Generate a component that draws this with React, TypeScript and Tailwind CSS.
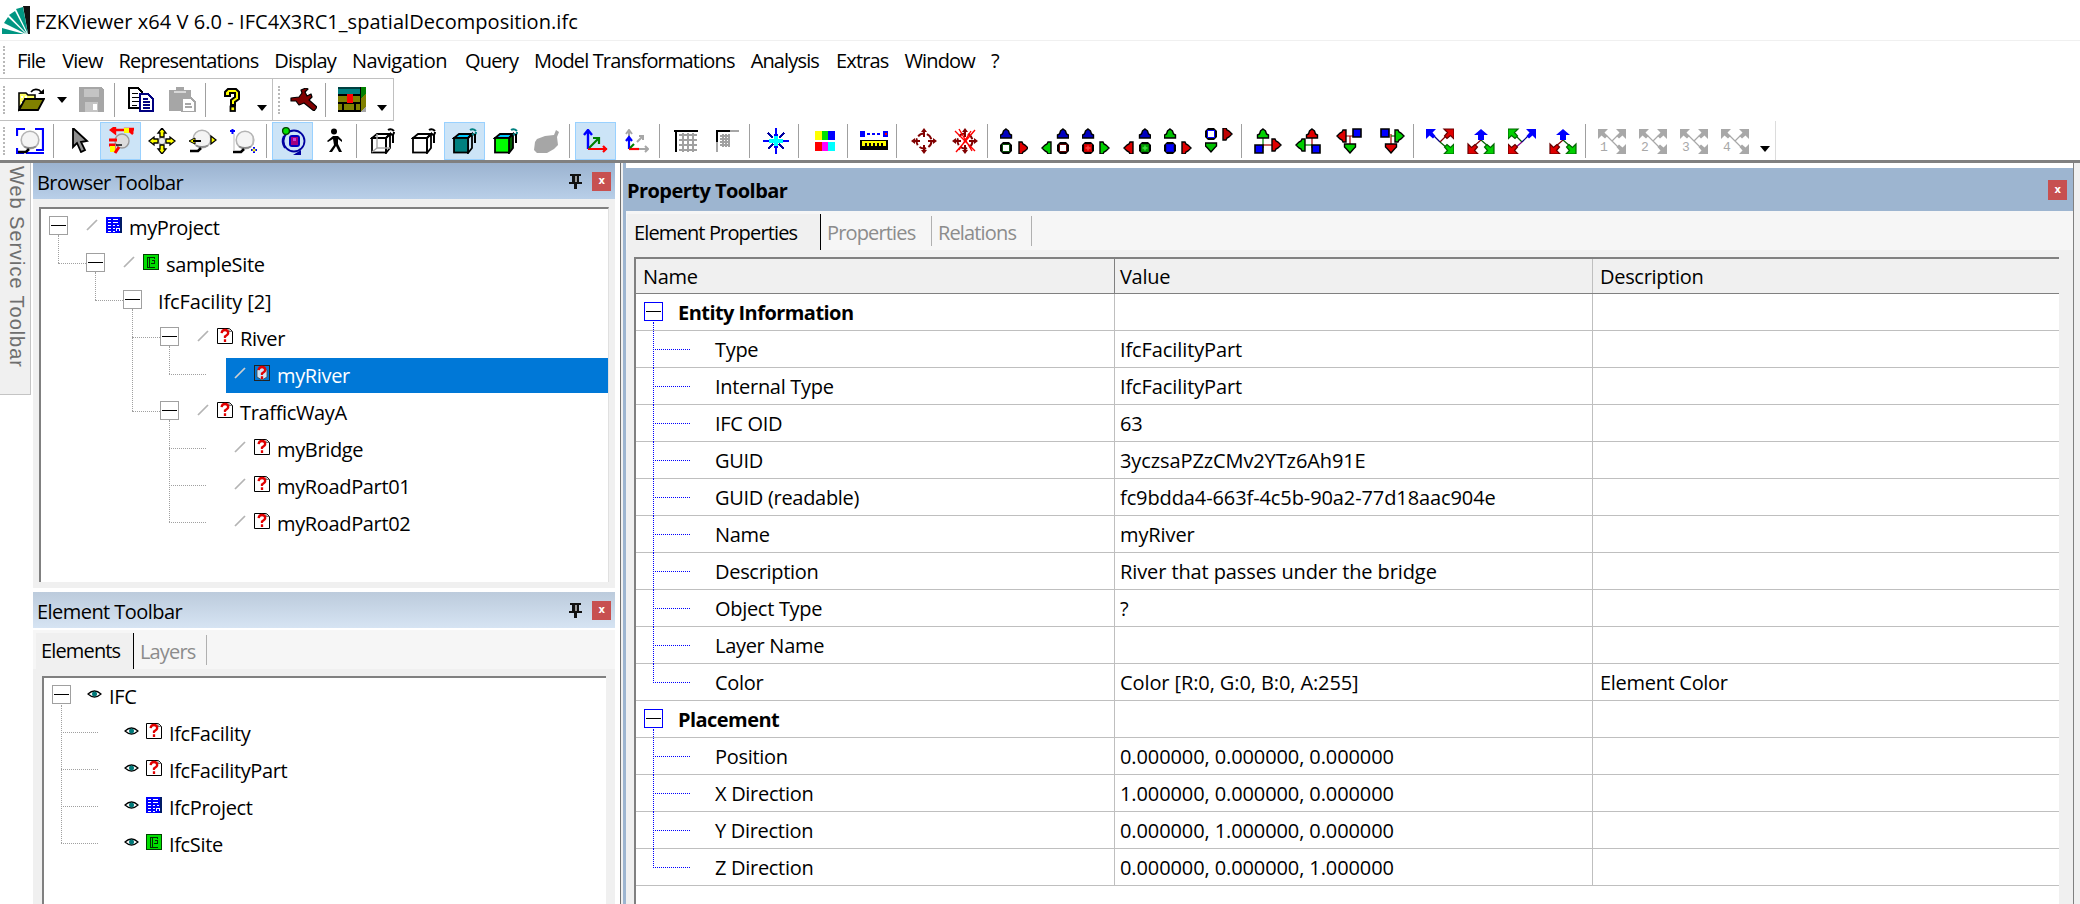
import type { ReactNode } from "react";

const K = "#000";

function Ico({ w = 28, h = 26, crisp = false, children }: { w?: number; h?: number; crisp?: boolean; children: ReactNode }) {
  return (
    <svg width={w} height={h} viewBox={`0 0 ${w} ${h}`} className="block shrink-0" shapeRendering={crisp ? "crispEdges" : "auto"}>
      {children}
    </svg>
  );
}

function Btn({ active, w = "w-[41px]", children }: { active?: boolean; w?: string; children: ReactNode }) {
  return (
    <div className={`${w} h-[38px] shrink-0 flex items-center justify-center border ${active ? "bg-[#cce4f7] border-[#99d1ff]" : "border-transparent"}`}>
      {children}
    </div>
  );
}

function Sep() {
  return (
    <div className="w-[8px] h-[38px] shrink-0 flex items-center pl-[2px]">
      <div className="w-px h-[34px] bg-[#a0a0a0]" />
    </div>
  );
}

function Drop({ mt }: { mt: string }) {
  return (
    <div className={`w-[20px] shrink-0 flex justify-center ${mt}`}>
      <div className="w-0 h-0 border-x-[5px] border-x-transparent border-t-[6px] border-t-black" />
    </div>
  );
}

function Grip() {
  return <div className="w-[3px] h-[28px] border-l-2 border-dotted border-[#b8b8b8] shrink-0" />;
}

/* small pixel shapes for the snap/move glyphs */
function Up({ x, y, c, dark = "#000" }: { x: number; y: number; c: string; dark?: string }) {
  return <polygon points={`${x + 5.5},${y} ${x + 8},${y + 2} ${x + 9},${y + 5} ${x + 11},${y + 6} ${x + 11},${y + 9} ${x},${y + 9} ${x},${y + 6} ${x + 2},${y + 5} ${x + 3},${y + 2}`} fill={c} stroke={dark} strokeWidth="1.4" />;
}
function Down({ x, y, c }: { x: number; y: number; c: string }) {
  return <polygon points={`${x},${y} ${x + 11},${y} ${x + 11},${y + 3} ${x + 9},${y + 5} ${x + 5.5},${y + 9} ${x + 2},${y + 5} ${x},${y + 3}`} fill={c} stroke={K} strokeWidth="1.4" />;
}
function Right({ x, y, c }: { x: number; y: number; c: string }) {
  return <polygon points={`${x},${y} ${x + 3},${y} ${x + 4},${y + 2} ${x + 6},${y + 3} ${x + 9},${y + 6} ${x + 6},${y + 9} ${x + 4},${y + 10} ${x + 3},${y + 12} ${x},${y + 12}`} fill={c} stroke={K} strokeWidth="1.4" />;
}
function Left({ x, y, c }: { x: number; y: number; c: string }) {
  return <polygon points={`${x + 9},${y} ${x + 6},${y} ${x + 5},${y + 2} ${x + 3},${y + 3} ${x},${y + 6} ${x + 3},${y + 9} ${x + 5},${y + 10} ${x + 6},${y + 12} ${x + 9},${y + 12}`} fill={c} stroke={K} strokeWidth="1.4" />;
}
function Dot({ x, y, ring = "#000", fill, cross }: { x: number; y: number; ring?: string; fill: string; cross?: string }) {
  return (
    <g>
      <polygon points={`${x + 3},${y} ${x + 9},${y} ${x + 12},${y + 3} ${x + 12},${y + 9} ${x + 9},${y + 12} ${x + 3},${y + 12} ${x},${y + 9} ${x},${y + 3}`} fill={K} />
      <rect x={x + 2} y={y + 2} width="8" height="8" fill={ring} />
      <rect x={x + 3} y={y + 3} width="6" height="6" fill={fill} />
      {cross && <path d={`M${x + 6} ${y + 3.5}v5M${x + 3.5} ${y + 6}h5`} stroke={cross} strokeWidth="1.4" />}
    </g>
  );
}
function Sq({ x, y, c }: { x: number; y: number; c: string }) {
  return <polygon points={`${x + 1},${y + 1} ${x + 9},${y + 1} ${x + 9},${y + 9} ${x + 1},${y + 9}`} fill={c} stroke={K} strokeWidth="1.6" />;
}
function Corner({ x, y, rot, c, edge }: { x: number; y: number; rot: number; c: string; edge?: string }) {
  return (
    <g transform={`translate(${x} ${y}) rotate(${rot} 5 5)`}>
      <polygon points="0,0 10,0 6.5,3.5 9.5,7 7,9.5 3.5,6.5 0,10" fill={c} stroke={edge ?? "none"} strokeWidth="1.2" />
    </g>
  );
}

function Mag({ x = 0, y = 0 }: { x?: number; y?: number }) {
  return (
    <g transform={`translate(${x} ${y})`}>
      <circle cx="12" cy="9" r="8.8" fill="#f4f4f4" stroke="#b4b4b4" strokeWidth="1.6" />
      <path d="M6 15.5q6 3 12 0" fill="none" stroke="#8c8c8c" strokeWidth="1.8" />
      <path d="M0 21h8l3-3" fill="none" stroke={K} strokeWidth="2.6" />
    </g>
  );
}

function Cube({ front = "none", side = "none", top = "none", inner, curl = K, edge = K }: { front?: string; side?: string; top?: string; inner?: boolean; curl?: string; edge?: string }) {
  return (
    <Ico w={26} h={26}>
      <polygon points="7,6 20,6 16,10 2,10" fill={top} stroke={edge} strokeWidth="1.8" />
      <polygon points="16,10 20,6 20,20 16,25" fill={side} stroke={edge} strokeWidth="1.8" />
      <rect x="2" y="10" width="14" height="14.5" fill={front} stroke={edge} strokeWidth="1.8" />
      {inner && <path d="M7 6v14h13M2 24l5-4" fill="none" stroke="#a6a6a6" strokeWidth="1.4" />}
      <path d="M20 6q4 2 4-2 M18 2q3-2 6 1" fill="none" stroke={curl} strokeWidth="2" />
      <path d="M23 6v9" stroke={K} strokeWidth="2" />
    </Ico>
  );
}

function Axes({ gray }: { gray?: boolean }) {
  return (
    <Ico w={25} h={24}>
      {gray && <path d="M5 2v10M5 20h19M21 17l3 3-3 3M2 5l3-4 3 4M13 13l6-6M15 7h4v4" fill="none" stroke="#a6a6a6" strokeWidth="2" />}
      {gray ? (
        <path d="M5 8v12M2 12l3-4 3 4" fill="none" stroke="#0000ff" strokeWidth="2.2" />
      ) : (
        <path d="M5 2v18M1 6l4-5 4 5" fill="none" stroke="#0000ff" strokeWidth="2.4" />
      )}
      <path d={gray ? "M5 20h10" : "M5 20h19M20 17l3 3-3 3"} fill="none" stroke="#ff0000" strokeWidth="2.2" />
      <path d={gray ? "M6 19l4-4" : "M6 19l9-9M10 9h6v6"} fill="none" stroke="#008000" strokeWidth="2.2" />
    </Ico>
  );
}

function GraySpread({ n }: { n: string }) {
  return (
    <Ico w={28} h={26}>
      <path d="M8 7l6 6M20 7l-6 6M14 13l6 6" stroke="#a8a8a8" strokeWidth="1.2" />
      <Corner x={0} y={1} rot={0} c="#a8a8a8" />
      <Corner x={18} y={1} rot={90} c="#a8a8a8" />
      <Corner x={18} y={16} rot={180} c="#a8a8a8" />
      <text x="2" y="23" fontSize="13" letterSpacing="0" fill="#a8a8a8" fontFamily="Liberation Mono">{n}</text>
    </Ico>
  );
}

function SpreadUp() {
  return (
    <Ico w={28} h={26}>
      <path d="M14 12L6 19" stroke="#800000" strokeWidth="1.2" />
      <path d="M14 12l8 7" stroke="#006000" strokeWidth="1.2" />
      <polygon points="14,1 21,7 17,7 17,12 11,12 11,7 7,7" fill="#0000ff" />
      <Corner x={1} y={16} rot={270} c="#e00000" edge="#600" />
      <Corner x={17} y={16} rot={180} c="#00d000" edge="#060" />
    </Ico>
  );
}

function Target({ x }: { x?: boolean }) {
  return (
    <Ico w={28} h={26}>
      <circle cx="14" cy="13" r="7.5" fill="none" stroke="#800000" strokeWidth="2" strokeDasharray="7 2.5" />
      <path d="M14 0l3 4h-2v5h-2V4h-2zM14 26l3-4h-2v-5h-2v5h-2zM1 13l4-3v2h5v2H5v2zM27 13l-4-3v2h-5v2h5v2z" fill="#800000" />
      {x && <path d="M4 3l20 20M24 2L5 24M8 1l13 22M20 3L8 22" stroke="#ff0000" strokeWidth="1.4" />}
    </Ico>
  );
}

const Q = () => (
  <svg width="16" height="16" viewBox="0 0 16 16" className="block shrink-0">
    <path d="M.5 .5h12l3 3v12H.5z" fill="#fff" stroke="#000" strokeWidth="1" />
    <path d="M12 .5v3h3" fill="#ddd" stroke="#777" strokeWidth="1" />
    <path d="M4.6 5.2q.3-3.2 3.4-3.2t3.2 3q0 1.6-3.2 3.4v1.6M8 11.2v2.8" fill="none" stroke="#e00000" strokeWidth="2.3" />
  </svg>
);

const QSel = () => (
  <svg width="16" height="16" viewBox="0 0 16 16" className="block shrink-0">
    <rect x=".5" y=".5" width="15" height="15" fill="#0078d7" stroke="#222" />
    <path d="M3 5l5-3 5 3v7l-5 3-5-3z" fill="#cfe4f6" stroke="#444" strokeWidth=".8" />
    <path d="M4.6 5.2q.3-3.2 3.4-3.2t3.2 3q0 1.6-3.2 3.4v1.6M8 11.2v2.8" fill="none" stroke="#e00000" strokeWidth="2.3" />
  </svg>
);

const Proj = () => (
  <svg width="16" height="16" viewBox="0 0 16 16" className="block shrink-0" shapeRendering="crispEdges">
    <rect width="16" height="16" fill="#0000ff" />
    <rect x="14" width="2" height="16" fill="#001a66" />
    <path d="M2 2h3M2 5h3M2 8h3M2 11h3M2 14h3M7 2h5M7 5h5M7 8h2M11 8h2M7 11h2M7 14h2" stroke="#fff" strokeWidth="1" />
    <path d="M10.5 14v-3h3v3" fill="none" stroke="#fff" />
  </svg>
);

const Site = () => (
  <svg width="16" height="16" viewBox="0 0 16 16" className="block shrink-0" shapeRendering="crispEdges">
    <rect width="16" height="16" fill="#00e000" />
    <path d="M.5 .5h15v15H.5z" fill="none" stroke="#004000" />
    <path d="M4 3h8M4 3v10M6 3v10M4 13h8M9 6h2v3H8M11 3v2" fill="none" stroke="#003000" />
  </svg>
);

const Slash = ({ selected }: { selected?: boolean }) => (
  <svg width="12" height="12" viewBox="0 0 12 12" className="block">
    <path d="M1 11L11 1" stroke={selected ? "#d0d0d0" : "#b4b4b4"} strokeWidth="1.7" />
  </svg>
);

const Eye = () => (
  <svg width="15" height="10" viewBox="0 0 15 10" className="block">
    <path d="M1 5q6.5-6 13 0q-6.5 6-13 0z" fill="#fff" stroke="#000" strokeWidth="1.2" />
    <circle cx="7.5" cy="5" r="2.5" fill="#007a7a" />
  </svg>
);

const Close = ({ size }: { size: string }) => (
  <div className={`${size} bg-[#c75050] flex items-center justify-center text-white text-[10px] font-bold leading-none font-['DejaVu_Sans']`}>x</div>
);

const Pin = () => (
  <svg width="13" height="15" viewBox="0 0 13 15" className="block" shapeRendering="crispEdges">
    <path d="M1 0h11v2h-2v6h3v2H8v5H5v-5H0V8h3V2H1z" fill="#111" />
    <rect x="6" y="2" width="2" height="6" fill="#999" />
  </svg>
);

type Node = {
  pad: number;
  box?: boolean;
  mark?: "slash" | "eye";
  icon?: ReactNode;
  label: string;
  selected?: boolean;
  tight?: boolean;
};

function TreeRow({ n }: { n: Node }) {
  const mark = (
    <>
      {n.mark === "slash" && <div className="w-[20px] shrink-0 mb-[5px]"><Slash selected={n.selected} /></div>}
      {n.mark === "eye" && <div className="w-[22px] -ml-[2px] shrink-0 mb-[6px]"><Eye /></div>}
      {n.icon && <div className="w-[23px] shrink-0 mb-[6px]">{n.icon}</div>}
      <span className={`${n.tight ? "-ml-[2px] tracking-[-0.1px]" : "tracking-[-0.35px]"} ${n.selected ? "text-white" : "text-black"}`}>{n.label}</span>
    </>
  );
  if (n.selected) {
    return (
      <div className="h-[37px] flex items-center">
        <div className="shrink-0" style={{ width: n.pad + 37 - 8 }} />
        <div className="flex-1 h-[35px] flex items-center pl-[8px] bg-[#0078d7]">{mark}</div>
      </div>
    );
  }
  return (
    <div className="h-[37px] flex items-center">
      <div className="shrink-0" style={{ width: n.pad }} />
      <div className="w-[37px] shrink-0">
        {n.box && (
          <div className="w-[19px] h-[19px] mb-[4px] border border-[#a0a0a0] bg-white flex items-center justify-center relative z-10">
            <div className="w-[15px] h-px bg-black" />
          </div>
        )}
      </div>
      {mark}
    </div>
  );
}

function Guide({ x, y, w, h }: { x: number; y: number; w?: number; h?: number }) {
  return (
    <div
      className={`absolute border-[#a0a0a0] border-dotted ${w ? "border-t" : "border-l"}`}
      style={{ left: x, top: y, width: w, height: h }}
    />
  );
}

const browserNodes: Node[] = [
  { pad: 8, box: true, mark: "slash", icon: <Proj />, label: "myProject" },
  { pad: 45, box: true, mark: "slash", icon: <Site />, label: "sampleSite" },
  { pad: 82, box: true, label: "IfcFacility [2]", tight: true },
  { pad: 119, box: true, mark: "slash", icon: <Q />, label: "River" },
  { pad: 156, mark: "slash", icon: <QSel />, label: "myRiver", selected: true },
  { pad: 119, box: true, mark: "slash", icon: <Q />, label: "TrafficWayA" },
  { pad: 156, mark: "slash", icon: <Q />, label: "myBridge" },
  { pad: 156, mark: "slash", icon: <Q />, label: "myRoadPart01" },
  { pad: 156, mark: "slash", icon: <Q />, label: "myRoadPart02" },
];

const elementNodes: Node[] = [
  { pad: 8, box: true, mark: "eye", label: "IFC" },
  { pad: 45, mark: "eye", icon: <Q />, label: "IfcFacility" },
  { pad: 45, mark: "eye", icon: <Q />, label: "IfcFacilityPart" },
  { pad: 45, mark: "eye", icon: <Proj />, label: "IfcProject" },
  { pad: 45, mark: "eye", icon: <Site />, label: "IfcSite" },
];

type Prop = { name: string; value?: string; desc?: string; last?: boolean };

const entityRows: Prop[] = [
  { name: "Type", value: "IfcFacilityPart" },
  { name: "Internal Type", value: "IfcFacilityPart" },
  { name: "IFC OID", value: "63" },
  { name: "GUID", value: "3yczsaPZzCMv2YTz6Ah91E" },
  { name: "GUID (readable)", value: "fc9bdda4-663f-4c5b-90a2-77d18aac904e" },
  { name: "Name", value: "myRiver" },
  { name: "Description", value: "River that passes under the bridge" },
  { name: "Object Type", value: "?" },
  { name: "Layer Name" },
  { name: "Color", value: "Color [R:0, G:0, B:0, A:255]", desc: "Element Color", last: true },
];

const placementRows: Prop[] = [
  { name: "Position", value: "0.000000, 0.000000, 0.000000" },
  { name: "X Direction", value: "1.000000, 0.000000, 0.000000" },
  { name: "Y Direction", value: "0.000000, 1.000000, 0.000000" },
  { name: "Z Direction", value: "0.000000, 0.000000, 1.000000", last: true },
];

function SectionRow({ label }: { label: string }) {
  return (
    <div className="h-[37px] flex border-b border-[#bfbfbf]">
      <div className="w-[479px] shrink-0 border-r border-[#bfbfbf] flex items-center pl-[8px] relative">
        <div className="w-[19px] h-[19px] mb-[2px] border border-[#0000ff] flex items-center justify-center shrink-0">
          <div className="w-[15px] h-px bg-black" />
        </div>
        <span className="ml-[15px] pt-[2px] font-bold">{label}</span>
        <div className="absolute left-[17px] top-[28px] bottom-0 border-l border-dotted border-[#0000ff]" />
      </div>
      <div className="w-[478px] shrink-0 border-r border-[#bfbfbf]" />
    </div>
  );
}

function PropRow({ p }: { p: Prop }) {
  return (
    <div className="h-[37px] flex border-b border-[#bfbfbf]">
      <div className="w-[479px] shrink-0 border-r border-[#bfbfbf] flex items-center pl-[79px] pt-[2px] relative tracking-[-0.3px]">
        <div className={`absolute left-[17px] top-0 border-l border-dotted border-[#0000ff] ${p.last ? "h-[19px]" : "h-[37px]"}`} />
        <div className="absolute left-[17px] top-[18px] w-[37px] border-t border-dotted border-[#0000ff]" />
        {p.name}
      </div>
      <div className="w-[478px] shrink-0 border-r border-[#bfbfbf] flex items-center pl-[5px] pt-[2px] tracking-[-0.1px]">{p.value}</div>
      <div className="flex-1 flex items-center pl-[7px] pt-[2px] tracking-[-0.3px]">{p.desc}</div>
    </div>
  );
}

function OffTab({ w, label }: { w: string; label: string }) {
  return (
    <div className={`${w} h-[36px] flex items-center text-[#8c8c8c] tracking-[-0.85px]`}>
      <span className="flex-1 pl-[6px] pt-[1px]">{label}</span>
      <div className="w-px h-[30px] bg-[#b0b0b0] self-start mt-[2px]" />
    </div>
  );
}

export default function App() {
  return (
    <div className="w-[2080px] h-[904px] overflow-hidden bg-white flex flex-col font-['Open_Sans','Noto_Sans',sans-serif] text-[20px] tracking-[-0.55px] text-black leading-none">
      {/* title */}
      <div className="h-[40px] shrink-0 flex items-center pl-[2px]">
        <svg width="28" height="28" viewBox="0 0 28 28" className="block shrink-0">
          <polygon points="21,0 28,0 28,28 26,28" fill="#111" />
          <polygon points="14,3 21,1 26,28" fill="#009682" />
          <polygon points="7,9 13,5 25,28" fill="#009682" />
          <polygon points="2,17 6,11 24,28" fill="#009682" />
          <polygon points="0,22 0,28 22,28" fill="#009682" />
        </svg>
        <span className="ml-[5px] pt-[4px] tracking-[0.05px]">FZKViewer x64 V 6.0 - IFC4X3RC1_spatialDecomposition.ifc</span>
      </div>

      {/* menu */}
      <div className="h-[38px] shrink-0 flex items-center border-t border-[#f0f0f0] pl-[3px]">
        <Grip />
        <div className="flex items-center gap-[16px] ml-[11px] pt-[2px] tracking-[-0.85px]">
          <span>File</span>
          <span className="ml-px">View</span>
          <span>Representations</span>
          <span>Display</span>
          <span className="tracking-[-0.45px]">Navigation</span>
          <span className="ml-[2px]">Query</span>
          <span>Model Transformations</span>
          <span>Analysis</span>
          <span className="ml-px">Extras</span>
          <span>Window</span>
          <span>?</span>
        </div>
      </div>

      {/* standard toolbar */}
      <div className="h-[43px] shrink-0 w-[394px] flex items-center border-y border-r border-[#c0c0c0] pl-[3px]">
        <Grip />
        <div className="w-[5px]" />
        <Btn>
          <Ico w={27} h={25}>
            <path d="M1 6h7l2 2h7v4H7L1 22z" fill="#ffff66" stroke={K} strokeWidth="1.6" />
            <path d="M3 9h2v2H3zM7 9h2v2H7zM5 12h2v2H5zM3 15h2v2H3z" fill="#fff" />
            <path d="M7 12h19l-6 11H1z" fill="#808000" stroke={K} strokeWidth="1.8" />
            <path d="M13 5q3-4 8-2l2 2" fill="none" stroke={K} strokeWidth="1.6" />
            <path d="M20 7h6V2z" fill={K} />
          </Ico>
        </Btn>
        <div className="w-[19px] shrink-0 flex justify-center">
          <div className="w-0 h-0 border-x-[5px] border-x-transparent border-t-[6px] border-t-black" />
        </div>
        <Btn>
          <Ico w={25} h={25} crisp>
            <path d="M0 0h22l3 3v22H0z" fill="#a6a6a6" />
            <rect x="5" y="2" width="15" height="8" fill="#c4c4c4" />
            <rect x="6" y="15" width="13" height="10" fill="#c4c4c4" />
            <rect x="14" y="17" width="4" height="6" fill="#fff" />
          </Ico>
        </Btn>
        <Sep />
        <div className="w-px" />
        <Btn>
          <Ico w={27} h={25} crisp>
            <path d="M1 1h9l4 4v16H1z" fill="#fff" stroke={K} strokeWidth="2" />
            <path d="M4 6h6M4 10h7M4 14h7M4 18h5" stroke={K} />
            <path d="M12 7h8l5 5v12H12z" fill="#fff" stroke="#000080" strokeWidth="2" />
            <path d="M15 12h5M15 15h7M15 18h7M15 21h7" stroke="#000080" strokeWidth="1.2" />
          </Ico>
        </Btn>
        <Btn>
          <Ico w={27} h={25} crisp>
            <path d="M0 3h7V0h8v3h7v21H0z" fill="#a6a6a6" />
            <rect x="5" y="4" width="12" height="2" fill="#d8d8d8" />
            <path d="M13 11h9l4 4v10H13z" fill="#fff" stroke="#a6a6a6" strokeWidth="2" />
            <path d="M16 17h6M16 20h7" stroke="#a6a6a6" strokeWidth="1.4" />
          </Ico>
        </Btn>
        <Sep />
        <Btn>
          <Ico w={20} h={25}>
            <path d="M3 9V5l3-3h8l3 3v7l-4 3v3H9v-5l4-3V6H8v3z" fill="#ffff00" stroke={K} strokeWidth="2" />
            <rect x="8.5" y="19.5" width="4.5" height="4.5" fill="#ffff00" stroke={K} strokeWidth="1.8" />
          </Ico>
        </Btn>
        <Drop mt="mt-[16px]" />
        <div className="w-px h-[41px] bg-[#c0c0c0]" />
        <div className="w-[5px]" />
        <Grip />
        <div className="w-[2px]" />
        <Btn w="w-[40px]">
          <Ico w={27} h={23}>
            <path d="M1 10L9 9L12 5L11 2L16 0L18 1L15 4L17 8L21 6L22 9L19 12L27 19L24 23L14 15L9 17L6 13L1 13z" fill="#800000" stroke={K} strokeWidth="1.2" strokeLinejoin="round" />
          </Ico>
        </Btn>
        <Sep />
        <Btn>
          <Ico w={28} h={26} crisp>
            <rect x="0" y="0" width="22" height="8" fill="#008080" />
            <rect x="0" y="0" width="22" height="2" fill="#004040" />
            <path d="M22 0h6v6l-6 7z" fill="#008000" />
            <rect x="0" y="9" width="22" height="16" fill="#808000" />
            <path d="M0 8h22M0 16h22M0 24h22M5 16v8M17 16v8" stroke="#000" strokeWidth="1.2" />
            <rect x="9" y="7" width="6" height="9" fill="#ff0000" />
            <path d="M22 13l6-7v14l-6 5z" fill="#808000" />
            <path d="M22 25l6-5v5z" fill="#a6a6a6" />
            <path d="M22 0v25" stroke="#000" />
          </Ico>
        </Btn>
        <Drop mt="mt-[16px]" />
      </div>

      {/* main toolbar */}
      <div className="h-[39px] shrink-0 w-[1776px] flex items-center border-r border-[#dcdcdc] pl-[3px]">
        <Grip />
        <div className="w-[3px]" />
        <Btn>
          <Ico w={28} h={26}>
            <path d="M1 8V1h8M19 1h8v21h-7" fill="none" stroke="#0000ff" strokeWidth="2.2" />
            <path d="M1 20v5h7" fill="none" stroke="#0000ff" strokeWidth="2.2" />
            <path d="M10 25h18" stroke="#0000ff" strokeWidth="2" />
            <Mag x={2} y={3} />
          </Ico>
        </Btn>
        <div className="w-[9px] h-[38px] shrink-0 flex items-center pl-[3px]"><div className="w-px h-[34px] bg-[#a0a0a0]" /></div>
        <Btn>
          <Ico w={18} h={25}>
            <polygon points="2,0 2,19 6,15 10,24 14,22 10,14 16,13" fill="#909090" stroke={K} strokeWidth="1.8" />
          </Ico>
        </Btn>
        <Btn active>
          <Ico w={28} h={27}>
            <circle cx="15" cy="14" r="7" fill="#dcdcdc" stroke="#999" strokeWidth="1.4" />
            <path d="M8 3h9M8 0l-4 3 4 3zM26 7l-6-5h7" fill="#ff0000" stroke="#ff0000" strokeWidth="2.4" />
            <rect x="17" y="1" width="5" height="5" fill="#ffff00" />
            <path d="M2 13h8M2 18h5v6" fill="none" stroke="#ff0000" strokeWidth="3" />
            <rect x="3" y="19" width="5" height="6" fill="#ffff00" />
            <path d="M12 20l-4 6" stroke="#ff0000" strokeWidth="3" />
            <path d="M9 18h6" stroke={K} strokeWidth="1.4" />
          </Ico>
        </Btn>
        <Btn>
          <Ico w={28} h={26}>
            <circle cx="14" cy="13" r="3.5" fill="#eee" stroke="#888" />
            <polygon points="14,0 18,5 16,5 16,9 12,9 12,5 10,5" fill="#ffff00" stroke={K} strokeWidth="1.3" />
            <polygon points="14,26 18,21 16,21 16,17 12,17 12,21 10,21" fill="#ffff00" stroke={K} strokeWidth="1.3" />
            <polygon points="1,13 6,9 6,11 10,11 10,15 6,15 6,17" fill="#ffff00" stroke={K} strokeWidth="1.3" />
            <polygon points="27,13 22,9 22,11 18,11 18,15 22,15 22,17" fill="#ffff00" stroke={K} strokeWidth="1.3" />
          </Ico>
        </Btn>
        <Btn>
          <Ico w={28} h={24}>
            <Mag x={1} y={1} />
            <polygon points="0,12 6,9 6,15" fill="#ffff00" stroke={K} strokeWidth="1" />
            <polygon points="27,11 22,7 22,15" fill="#ffff00" stroke={K} strokeWidth="1.3" />
            <path d="M4 12h8" stroke={K} strokeWidth="2" />
          </Ico>
        </Btn>
        <Btn>
          <Ico w={28} h={26}>
            <Mag x={3} y={3} />
            <path d="M0 3h5M2.5 1v5" stroke="#0000ff" strokeWidth="2" />
            <path d="M21 22h6M24 19v6" stroke="#0000ff" strokeWidth="2" />
            <circle cx="24" cy="22" r="1.6" fill="#ffff00" />
            <path d="M4 6v16M23 8v9" stroke="#bbb" strokeWidth="1" />
          </Ico>
        </Btn>
        <Sep />
        <Btn active>
          <Ico w={28} h={29}>
            <circle cx="15" cy="15" r="10.5" fill="none" stroke="#0000a0" strokeWidth="1.8" />
            <path d="M5 10q-3 6 1 12" fill="none" stroke="#0000a0" strokeWidth="2" />
            <rect x="10" y="9" width="11" height="12" rx="3" fill="#0000c0" />
            <rect x="12" y="11" width="7" height="8" fill="#a00080" />
            <rect x="14" y="12" width="3" height="3" fill="#d040d0" />
            <polygon points="14,29 22,29 22,24" fill="#0000a0" />
            <circle cx="7" cy="5" r="3.4" fill="#00e000" stroke="#004000" strokeWidth="1.4" />
          </Ico>
        </Btn>
        <Btn>
          <Ico w={17} h={25}>
            <circle cx="9" cy="3.5" r="3" fill={K} />
            <path d="M8 8l-6 5 1 1 5-3 1 6-5 7h3l4-6 3 6h3l-4-8V11l4 3 1-1-5-5z" fill={K} />
          </Ico>
        </Btn>
        <Sep />
        <Btn><Cube inner /></Btn>
        <Btn><Cube /></Btn>
        <Btn active><Cube front="#008080" top="#00c8ff" curl="#008080" /></Btn>
        <Btn><Cube front="#00ff00" side="#006000" top="#00c8ff" curl="#008080" /></Btn>
        <Btn>
          <Ico w={26} h={25}>
            <path d="M3 11l8-3 9-1 2-5 3 2-2 5 1 8-4 4-7 4H3l-3-3 1-8z" fill="#a6a6a6" />
          </Ico>
        </Btn>
        <Sep />
        <Btn active><Axes /></Btn>
        <Btn><Axes gray /></Btn>
        <Sep />
        <Btn>
          <Ico w={24} h={22} crisp>
            <path d="M5 5h18M5 10h18M5 15h18M5 20h18M9 3v19M14 3v19M19 3v19" stroke="#a0a0a0" strokeWidth="1.6" />
            <path d="M0 1h24M2 0v22" stroke={K} strokeWidth="2.4" />
          </Ico>
        </Btn>
        <Btn>
          <Ico w={24} h={22} crisp>
            <path d="M5 6h10M5 9h10M5 12h10M5 15h10M8 4v13M11 4v13M14 4v13" stroke="#a0a0a0" strokeWidth="1.6" />
            <path d="M2 1h13" stroke={K} strokeWidth="2.4" />
            <path d="M15 1h9M2 12v10" stroke="#a6a6a6" strokeWidth="2.4" />
            <path d="M2 0v12" stroke={K} strokeWidth="2.4" />
          </Ico>
        </Btn>
        <Sep />
        <Btn>
          <Ico w={26} h={26} crisp>
            <path d="M13 0v26M0 13h26" stroke="#0000ff" strokeWidth="2.4" />
            <path d="M13 6v14M6 13h14" stroke="#00ffff" strokeWidth="3.4" />
            <path d="M5 5l5 5M21 5l-5 5M5 21l5-5M21 21l-5-5" stroke="#0000a0" strokeWidth="2.8" />
            <path d="M11 7h4M11 19h4" stroke="#0000ff" strokeWidth="2" />
          </Ico>
        </Btn>
        <Sep />
        <Btn>
          <Ico w={20} h={20} crisp>
            <rect x="0" y="0" width="7" height="9" fill="#ffff00" />
            <rect x="7" y="0" width="6" height="9" fill="#00e000" />
            <rect x="13" y="0" width="7" height="9" fill="#0000ff" />
            <rect x="0" y="11" width="7" height="9" fill="#ff0000" />
            <rect x="7" y="11" width="6" height="9" fill="#ff00ff" />
            <rect x="13" y="11" width="7" height="9" fill="#00ffff" />
          </Ico>
        </Btn>
        <Sep />
        <Btn>
          <Ico w={28} h={19} crisp>
            <rect x="0" y="0" width="5" height="6" fill="#0000ff" />
            <rect x="23" y="0" width="5" height="6" fill="#0000ff" />
            <rect x="25" y="2" width="2" height="2" fill="#ff0000" />
            <path d="M7 3h15" stroke="#0000ff" strokeWidth="2" strokeDasharray="3 2" />
            <rect x="0" y="9" width="28" height="10" fill="#000" />
            <rect x="2" y="10" width="24" height="5" fill="#ffff00" />
            <path d="M6 12v3M10 12v3M14 12v3M18 12v3M22 12v3" stroke="#000" strokeWidth="1.4" />
          </Ico>
        </Btn>
        <Sep />
        <div className="w-[1px]" />
        <Btn><Target /></Btn>
        <Btn><Target x /></Btn>
        <Sep />
        <Btn>
          <Ico w={28} h={26}>
            <Up x={0.5} y={1} c="#0000c0" />
            <Dot x={0} y={14} ring="#064f06" fill="#fff" />
            <Right x={19} y={14} c="#e00000" />
          </Ico>
        </Btn>
        <Btn>
          <Ico w={28} h={26}>
            <Left x={1} y={14} c="#00d000" />
            <Up x={16.5} y={1} c="#0000c0" />
            <Dot x={16} y={14} ring="#600000" fill="#fff" />
          </Ico>
        </Btn>
        <Btn>
          <Ico w={28} h={26}>
            <Up x={0.5} y={1} c="#0000c0" />
            <Dot x={0} y={14} ring="#c00000" fill="#e00000" cross="#ff4040" />
            <Right x={18} y={14} c="#00d000" />
          </Ico>
        </Btn>
        <Btn>
          <Ico w={28} h={26}>
            <Left x={1} y={14} c="#e00000" />
            <Up x={16.5} y={1} c="#0000c0" />
            <Dot x={16} y={14} ring="#008000" fill="#00a000" cross="#40e040" />
          </Ico>
        </Btn>
        <Btn>
          <Ico w={28} h={26}>
            <Up x={0.5} y={1} c="#00c000" />
            <Dot x={0} y={14} ring="#0000c0" fill="#0000ff" />
            <Right x={18} y={14} c="#e00000" />
          </Ico>
        </Btn>
        <Btn>
          <Ico w={28} h={26}>
            <Dot x={0} y={0} ring="#0000ff" fill="#fff" />
            <Right x={18} y={0} c="#c00000" />
            <Down x={0.5} y={15} c="#00c000" />
          </Ico>
        </Btn>
        <Sep />
        <Btn>
          <Ico w={28} h={26}>
            <path d="M9 8v12" stroke="#008000" strokeWidth="1.2" />
            <path d="M9 17h12" stroke="#a00000" strokeWidth="1.2" />
            <Up x={3.5} y={1} c="#00d000" />
            <Sq x={0} y={16} c="#0000ff" />
            <Right x={18} y={11} c="#e00000" />
          </Ico>
        </Btn>
        <Btn>
          <Ico w={28} h={26}>
            <path d="M17 8v12" stroke="#a00000" strokeWidth="1.2" />
            <path d="M8 17h9" stroke="#008000" strokeWidth="1.2" />
            <Up x={11.5} y={1} c="#e00000" />
            <Left x={1} y={11} c="#00d000" />
            <Sq x={16} y={16} c="#0000ff" />
          </Ico>
        </Btn>
        <Btn>
          <Ico w={28} h={26}>
            <path d="M8 8h9M14 8v10" stroke="#a00000" strokeWidth="1.2" />
            <Left x={1} y={2} c="#e00000" />
            <Sq x={16} y={0} c="#0000ff" />
            <Down x={8.5} y={16} c="#00d000" />
          </Ico>
        </Btn>
        <Btn>
          <Ico w={28} h={26}>
            <path d="M14 6v12" stroke="#a00000" strokeWidth="1.2" />
            <path d="M14 8h8" stroke="#008000" strokeWidth="1.2" />
            <Sq x={3} y={0} c="#0000ff" />
            <Right x={18} y={2} c="#00d000" />
            <Down x={8.5} y={16} c="#e00000" />
          </Ico>
        </Btn>
        <Sep />
        <Btn>
          <Ico w={28} h={26}>
            <path d="M8 8l6 6" stroke="#000080" strokeWidth="1.2" />
            <path d="M20 8l-6 6" stroke="#800000" strokeWidth="1.2" />
            <path d="M14 14l7 6" stroke="#006000" strokeWidth="1.2" />
            <Corner x={0} y={1} rot={0} c="#0000ff" />
            <Corner x={18} y={1} rot={90} c="#e00000" edge="#600" />
            <Corner x={18} y={16} rot={180} c="#00d000" edge="#060" />
          </Ico>
        </Btn>
        <Btn><SpreadUp /></Btn>
        <Btn>
          <Ico w={28} h={26}>
            <path d="M8 8l6 6" stroke="#006000" strokeWidth="1.2" />
            <path d="M20 8l-6 6" stroke="#000080" strokeWidth="1.2" />
            <path d="M14 14l-7 6" stroke="#800080" strokeWidth="1.2" />
            <Corner x={0} y={1} rot={0} c="#00d000" edge="#060" />
            <Corner x={18} y={1} rot={90} c="#0000ff" />
            <Corner x={0} y={16} rot={270} c="#e00000" edge="#600" />
          </Ico>
        </Btn>
        <Btn><SpreadUp /></Btn>
        <Sep />
        <Btn><GraySpread n="1" /></Btn>
        <Btn><GraySpread n="2" /></Btn>
        <Btn><GraySpread n="3" /></Btn>
        <Btn><GraySpread n="4" /></Btn>
        <Drop mt="mt-[16px]" />
      </div>

      {/* dock area */}
      <div className="flex-1 min-h-0 flex border-t-[3px] border-[#808080]">
        {/* collapsed tab */}
        <div className="w-[31px] h-[232px] shrink-0 bg-[#f0f0f0] border-r border-b border-[#c4c4c4] pl-[7px] pt-[3px]">
          <span className="[writing-mode:vertical-rl] font-['Liberation_Sans'] text-[#6e6e6e] tracking-[0.95px] leading-[20px]">Web Service Toolbar</span>
        </div>
        <div className="w-[2px] shrink-0" />

        {/* left column */}
        <div className="w-[582px] shrink-0 flex flex-col">
          <div className="h-[36px] shrink-0 flex items-center bg-gradient-to-b from-[#9bb3d0] to-[#b9cfe8] pl-[4px] pr-[4px]">
            <span className="flex-1 pt-[3px]">Browser Toolbar</span>
            <Pin />
            <div className="w-[10px]" />
            <Close size="w-[19px] h-[19px]" />
          </div>
          <div className="h-[389px] shrink-0 bg-[#f0f0f0] px-[6px] pt-[8px] pb-[6px]">
            <div className="h-full border-t-2 border-l-2 border-[#808080] border-r border-b-0 border-r-[#e0e0e0] bg-white relative">
              <Guide x={17} y={26} h={28} />
              <Guide x={17} y={54} w={28} />
              <Guide x={54} y={63} h={28} />
              <Guide x={54} y={91} w={28} />
              <Guide x={91} y={100} h={102} />
              <Guide x={91} y={128} w={28} />
              <Guide x={91} y={202} w={28} />
              <Guide x={128} y={137} h={28} />
              <Guide x={128} y={165} w={37} />
              <Guide x={128} y={211} h={102} />
              <Guide x={128} y={239} w={37} />
              <Guide x={128} y={276} w={37} />
              <Guide x={128} y={313} w={37} />
              <div className="relative">
                {browserNodes.map((n) => (
                  <TreeRow key={n.label} n={n} />
                ))}
              </div>
            </div>
          </div>
          <div className="h-[4px] shrink-0" />
          <div className="h-[36px] shrink-0 flex items-center bg-gradient-to-b from-[#bccbdc] to-[#d6e4f3] pl-[4px] pr-[4px]">
            <span className="flex-1 pt-[3px]">Element Toolbar</span>
            <Pin />
            <div className="w-[10px]" />
            <Close size="w-[19px] h-[19px]" />
          </div>
          <div className="h-[2px] shrink-0" />
          <div className="h-[39px] shrink-0 bg-[#f6f6f6] flex items-end pl-[3px]">
            <div className="w-[98px] h-[36px] bg-[#f0f0f0] border-r border-black flex items-center pl-[5px] tracking-[-0.85px]">Elements</div>
            <OffTab w="w-[73px]" label="Layers" />
          </div>
          <div className="flex-1 bg-[#f0f0f0] pl-[9px] pr-[9px] pt-[7px]">
            <div className="h-full border-t-2 border-l-2 border-[#808080] bg-white relative">
              <Guide x={17} y={27} h={138} />
              <Guide x={17} y={54} w={37} />
              <Guide x={17} y={91} w={37} />
              <Guide x={17} y={128} w={37} />
              <Guide x={17} y={165} w={37} />
              <div className="relative">
                {elementNodes.map((n) => (
                  <TreeRow key={n.label} n={n} />
                ))}
              </div>
            </div>
          </div>
        </div>

        {/* splitter */}
        <div className="w-[5px] shrink-0" />
        <div className="w-px shrink-0 bg-[#707070]" />
        <div className="w-[2px] shrink-0 bg-[#f0f0f0]" />

        {/* property panel */}
        <div className="flex-1 min-w-0 flex flex-col border-l-[3px] border-[#9db5d0] pt-[5px] bg-white">
          <div className="h-[43px] shrink-0 bg-[#9db5d0] -ml-[3px] flex items-center pl-[4px] pr-[6px]">
            <span className="flex-1 pt-[3px] font-bold">Property Toolbar</span>
            <Close size="w-[19px] h-[20px]" />
          </div>
          <div className="h-[39px] shrink-0 bg-[#f6f6f6] flex items-end pl-px">
            <div className="w-[194px] h-[36px] bg-[#f0f0f0] border-r border-black flex items-center pl-[7px] pt-[1px] tracking-[-0.85px]">Element Properties</div>
            <OffTab w="w-[111px]" label="Properties" />
            <OffTab w="w-[100px]" label="Relations" />
          </div>
          <div className="flex-1 min-h-0 bg-[#f0f0f0] pl-[8px] pr-[14px] pt-[7px]">
            <div className="h-full border-t-2 border-l-2 border-[#808080] bg-white">
              <div className="h-[35px] flex bg-[#f0f0f0] border-b border-[#808080]">
                <div className="w-[479px] shrink-0 border-r border-[#808080] flex items-center pl-[7px] pt-[1px] tracking-[-0.3px]">Name</div>
                <div className="w-[478px] shrink-0 border-r border-[#bfbfbf] flex items-center pl-[5px] pt-[1px] tracking-[-0.3px]">Value</div>
                <div className="flex-1 flex items-center pl-[7px] pt-[1px] tracking-[-0.3px]">Description</div>
              </div>
              <SectionRow label="Entity Information" />
              {entityRows.map((p) => (
                <PropRow key={p.name} p={p} />
              ))}
              <SectionRow label="Placement" />
              {placementRows.map((p) => (
                <PropRow key={p.name} p={p} />
              ))}
            </div>
          </div>
        </div>
        <div className="w-[7px] shrink-0 bg-[#f0f0f0] border-l border-[#808080]" />
      </div>
    </div>
  );
}
